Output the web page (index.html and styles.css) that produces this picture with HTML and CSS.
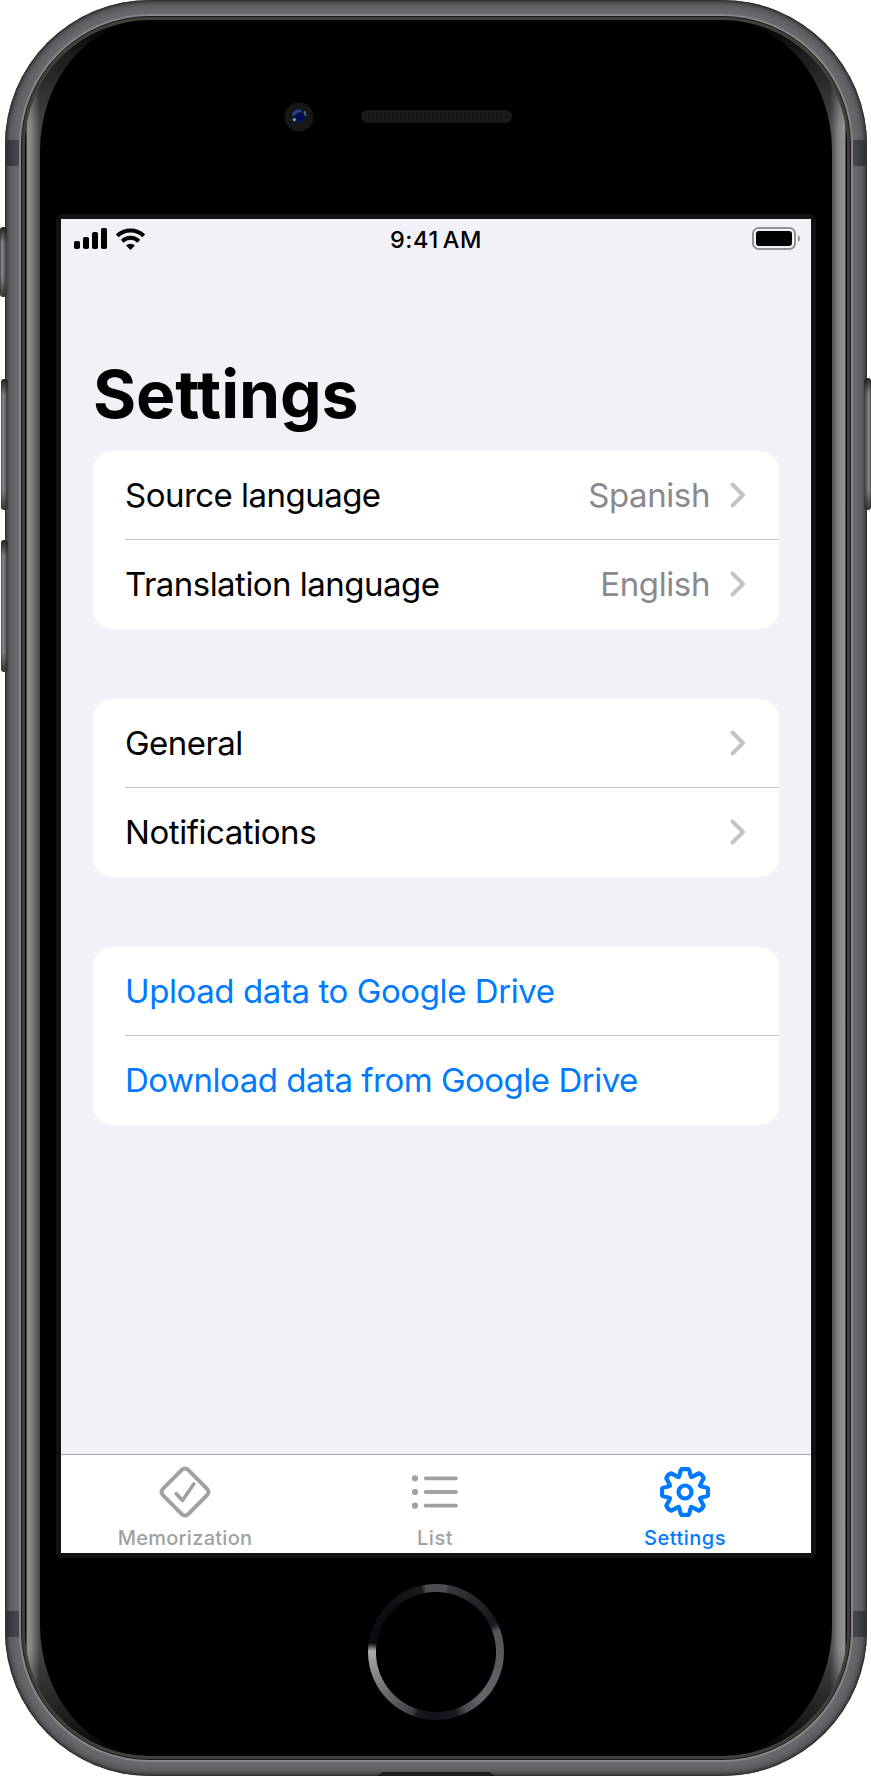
FILE: index.html
```html
<!DOCTYPE html>
<html lang="en">
<head>
<meta charset="utf-8">
<title>Settings</title>
<link rel="stylesheet" href="styles.css">
</head>
<body>
<div class="stage">
  <i class="key key-mute"></i><i class="key key-up"></i><i class="key key-down"></i><i class="key key-power"></i>
  <div class="phone">
    <i class="band band-tl"></i><i class="band band-tr"></i><i class="band band-bl"></i><i class="band band-br"></i>
    <i class="port"></i>
    <div class="rim">
      <div class="glass">
        <div class="face">
          <div class="sensors">
            <svg class="camera" viewBox="0 0 30 30"><circle cx="15" cy="15" r="14.5" fill="#171717"/><circle cx="15" cy="15" r="7.6" fill="#10182f"/><circle cx="16" cy="15.5" r="4" fill="#020b55"/><path d="M9.5 12.5Q12 8 16 9" stroke="#29479a" stroke-width="2.6" fill="none" stroke-linecap="round"/><circle cx="10.3" cy="17.6" r="1.7" fill="#8292ae"/><path d="M20.5 10l1 3" stroke="#47799b" stroke-width="1.8" stroke-linecap="round"/></svg>
            <div class="speaker"></div>
          </div>
          <div class="screen">
            <div class="statusbar">
              <svg class="reception" viewBox="0 0 74 24"><rect x="0" y="14" width="6" height="8" rx="1.8"/><rect x="9" y="10" width="6" height="12" rx="1.8"/><rect x="18" y="5" width="6" height="17" rx="1.8"/><rect x="27" y="1" width="6" height="21" rx="1.8"/><g fill="none" stroke="#000" stroke-width="4"><path d="M43.2 8.8A19.2 19.2 0 0 1 69.8 8.8"/><path d="M48.2 14.2A12 12 0 0 1 64.8 14.2"/></g><path d="M56.500 23L52.100 18.500A6.300 6.300 0 0 1 60.900 18.500Z"/></svg>
              <span class="time">9:41<span class="meridiem">AM</span></span>
              <svg class="battery" viewBox="0 0 49 24"><rect x="1" y="1" width="42" height="21" rx="5.500" fill="none" stroke="#929295" stroke-width="2"/><rect x="4" y="4" width="36" height="15" rx="3"/><path d="M46 8Q48 9 48 11.500T46 15Z" fill="#929295"/></svg>
            </div>
            <main class="content">
              <h1>Settings</h1>
              <section class="card">
                <div class="row"><span class="t-source">Source language</span><span class="value">Spanish</span><svg class="chev" viewBox="0 0 16 26"><path d="M2.500 2.500L13 13L2.500 23.500"/></svg></div>
                <div class="row"><span class="t-translation">Translation language</span><span class="value">English</span><svg class="chev" viewBox="0 0 16 26"><path d="M2.500 2.500L13 13L2.500 23.500"/></svg></div>
              </section>
              <section class="card">
                <div class="row"><span class="t-general">General</span><svg class="chev" viewBox="0 0 16 26"><path d="M2.500 2.500L13 13L2.500 23.500"/></svg></div>
                <div class="row"><span class="t-notifications">Notifications</span><svg class="chev" viewBox="0 0 16 26"><path d="M2.500 2.500L13 13L2.500 23.500"/></svg></div>
              </section>
              <section class="card links">
                <div class="row"><span class="t-upload">Upload data to Google Drive</span></div>
                <div class="row"><span class="t-download">Download data from Google Drive</span></div>
              </section>
            </main>
            <nav class="tabs">
              <div class="tab"><svg class="icon" viewBox="-26 -26 52 52"><rect x="-17.900" y="-17.900" width="35.800" height="35.800" rx="4.500" transform="rotate(45)" stroke-width="4"/><path d="M-8.700 1.700L-2.500 8.500L8.800 -8" stroke-width="3.600"/></svg><span class="l-mem">Memorization</span></div>
              <div class="tab"><svg class="icon" viewBox="-26 -26 52 52"><g fill="#a1a1a1" stroke="none"><circle cx="-20" cy="-13.700" r="3.100"/><circle cx="-20" cy="0" r="3.100"/><circle cx="-20" cy="13.700" r="3.100"/></g><path d="M-9.300 -13.700H21M-9.300 0H21M-9.300 13.700H21" stroke-width="3.800"/></svg><span class="l-list">List</span></div>
              <div class="tab active"><svg class="icon" viewBox="-26 -26 52 52"><g stroke-width="4.200"><path d="M-3.600 -22.900H3.600Q4.600 -22 5 -18.500L6.200 -15L8.500 -15.800L13.700 -18.700Q17.500 -17.500 18.700 -13.700L15.800 -8.500L15 -6.200L18.500 -5Q22 -4.600 22.900 -3.600V3.600Q22 4.600 18.500 5L15 6.200L15.800 8.500L18.700 13.700Q17.500 17.500 13.700 18.700L8.500 15.800L6.200 15L5 18.500Q4.600 22 3.600 22.900H-3.600Q-4.600 22 -5 18.500L-6.200 15L-8.500 15.800L-13.700 18.700Q-17.500 17.500 -18.700 13.700L-15.800 8.500L-15 6.200L-18.500 5Q-22 4.600 -22.900 3.600V-3.600Q-22 -4.600 -18.500 -5L-15 -6.200L-15.800 -8.500L-18.700 -13.700Q-17.500 -17.500 -13.700 -18.700L-8.500 -15.800L-6.200 -15L-5 -18.500Q-4.600 -22 -3.600 -22.900Z"/><circle r="6.500"/></g></svg><span class="l-set">Settings</span></div>
            </nav>
          </div>
          <div class="home"></div>
        </div>
      </div>
    </div>
  </div>
</div>
</body>
</html>
```
FILE: styles.css
```css
* { box-sizing: border-box; }
body { margin: 0; background: #fff; font-family: Inter, "Liberation Sans", sans-serif; color: #000; }
.stage { position: relative; width: 871px; height: 1776px; padding: 0 4px 0 5px; overflow: hidden; }
.phone {
  position: relative; height: 1776px; padding: 16px; border-radius: 145px; overflow: hidden;
  background: #69696e;
  box-shadow: inset 0 0 3px 1px #222225, inset 0 0 11px 2px #39393c;
}
.rim {
  position: relative; height: 1744px; border: 1px solid #171717; padding: 3px;
  border-radius: 129px; background: #40413b; box-shadow: 0 0 0 2px #85858a;
}
.glass {
  height: 1736px; padding: 1px 15px; border-radius: 125px; overflow: hidden;
  background:
    linear-gradient(#000 0, rgba(0,0,0,.6) 35px, transparent 105px, transparent 1630px, rgba(0,0,0,.6) 1701px, #000),
    linear-gradient(90deg, #000 0, #000 1px, #8f8f8f 2px, #858585 6px, #444 15px, #444 805px, #858585 814px, #939393 820px, #000 821px);
}
.face {
  height: 1734px; background: #000; border-radius: 110px / 130px;
  display: flex; flex-direction: column; align-items: center;
}
.sensors { width: 100%; height: 193px; padding: 81px 0 0 244px; display: flex; align-items: flex-start; gap: 47px; flex: none; }
.camera { width: 30px; height: 30px; }
.speaker {
  width: 151px; height: 13px; margin-top: 8px; border-radius: 7px; background-color: #1b1b1b;
  background-image: repeating-linear-gradient(90deg, transparent 0 3px, #161616 3px 4px), repeating-linear-gradient(transparent 0 3px, #161616 3px 4px);
}
.screen { width: 760px; height: 1344px; border: 5px solid #111; border-radius: 5px; background: linear-gradient(#f2f1f7, #f2f1f7) padding-box; display: flex; flex-direction: column; flex: none; }
.statusbar { height: 40px; padding: 8px 10px 0 13px; display: grid; grid-template-columns: 1fr 95px 1fr; }
.reception { width: 74px; height: 24px; }
.time { font-size: 23.5px; font-weight: 500; line-height: 26px; white-space: nowrap; letter-spacing: .55px; }
.meridiem { margin-left: 4px; }
.battery { width: 49px; height: 24px; justify-self: end; }
.content { flex: 1; padding: 0 32px; }
h1 { margin: 95px 0 0; height: 97px; font-size: 66px; line-height: 80px; font-weight: 700; letter-spacing: -.1px; }
.card { height: 178px; border-radius: 20px; background: #fff; padding-left: 32px; margin-bottom: 70px; }
.row { height: 89px; display: flex; align-items: center; padding-right: 33px; font-size: 33px; letter-spacing: -.53px; white-space: nowrap; }
.row:first-child { border-bottom: 1px solid #c6c6c8; }
.row:last-child { height: 88px; }
.t-notifications { letter-spacing: -.44px; }
.t-upload { letter-spacing: -.41px; }
.t-download { letter-spacing: -.49px; }
.value { margin-left: auto; color: #8a8a8e; letter-spacing: -.4px; }
.chev { width: 16px; height: 26px; margin-left: auto; fill: none; stroke: #c4c4c6; stroke-width: 4; stroke-linecap: round; stroke-linejoin: round; }
.value + .chev { margin-left: 20px; }
.links { color: #007aff; }
.tabs { height: 99px; border-top: 1px solid #a8a8ac; background: #fff; display: grid; grid-template-columns: repeat(3, 1fr); }
.tab { display: flex; flex-direction: column; align-items: center; padding: 11px 2px 0 0; gap: 8px; font-size: 20px; line-height: 24px; font-weight: 500; letter-spacing: .5px; color: #a1a1a1; }
.l-mem { letter-spacing: .28px; }
.active { color: #007aff; }
.icon { width: 52px; height: 52px; overflow: visible; fill: none; stroke: currentColor; stroke-linecap: round; stroke-linejoin: round; }
.home {
  width: 136px; height: 136px; margin-top: 26px; border-radius: 50%; flex: none;
  background: radial-gradient(circle, #000 59.500px, transparent 60.500px),
    conic-gradient(#4d4c50 0 9deg, #38373b 12deg, #17171c 60deg, #1b1b20 65deg, #55545a 71deg, #5b5a60 100deg, #66656b 135deg, #4a494f 153deg, #18181d 162deg, #11131a 185deg, #1c1c22 197deg, #414046 202deg, #626166 225deg, #a0a0a0 265deg, #aaa 271deg, #0b0b10 278deg, #0c0c13 310deg, #1a1a1e 347deg, #4d4c50 351deg);
}
.band { position: absolute; width: 16px; height: 26px; background: linear-gradient(90deg, #2d3035, #4a4c52); }
.band-tl { left: 0; top: 140px; }
.band-tr { right: 0; top: 140px; transform: scaleX(-1); }
.band-bl { left: 0; top: 1611px; }
.band-br { right: 0; top: 1611px; transform: scaleX(-1); }
.port { position: absolute; left: 372px; bottom: 0; width: 118px; height: 4px; background: #1c1c1e; clip-path: polygon(6px 0, 112px 0, 100% 100%, 0 100%); }
.key { position: absolute; z-index: 1; width: 7px; border-radius: 3px; background: linear-gradient(#222 0, transparent 16px, transparent calc(100% - 20px), #333), linear-gradient(90deg, #444 0, #8d8f94 2px, #65656b 4px, #3a3a3e 7px); }
.key-mute { left: 0; top: 227px; height: 70px; }
.key-up { left: 1px; top: 379px; height: 131px; }
.key-down { left: 1px; top: 540px; height: 132px; }
.key-power { right: 0; top: 378px; height: 132px; transform: scaleX(-1); }
```
